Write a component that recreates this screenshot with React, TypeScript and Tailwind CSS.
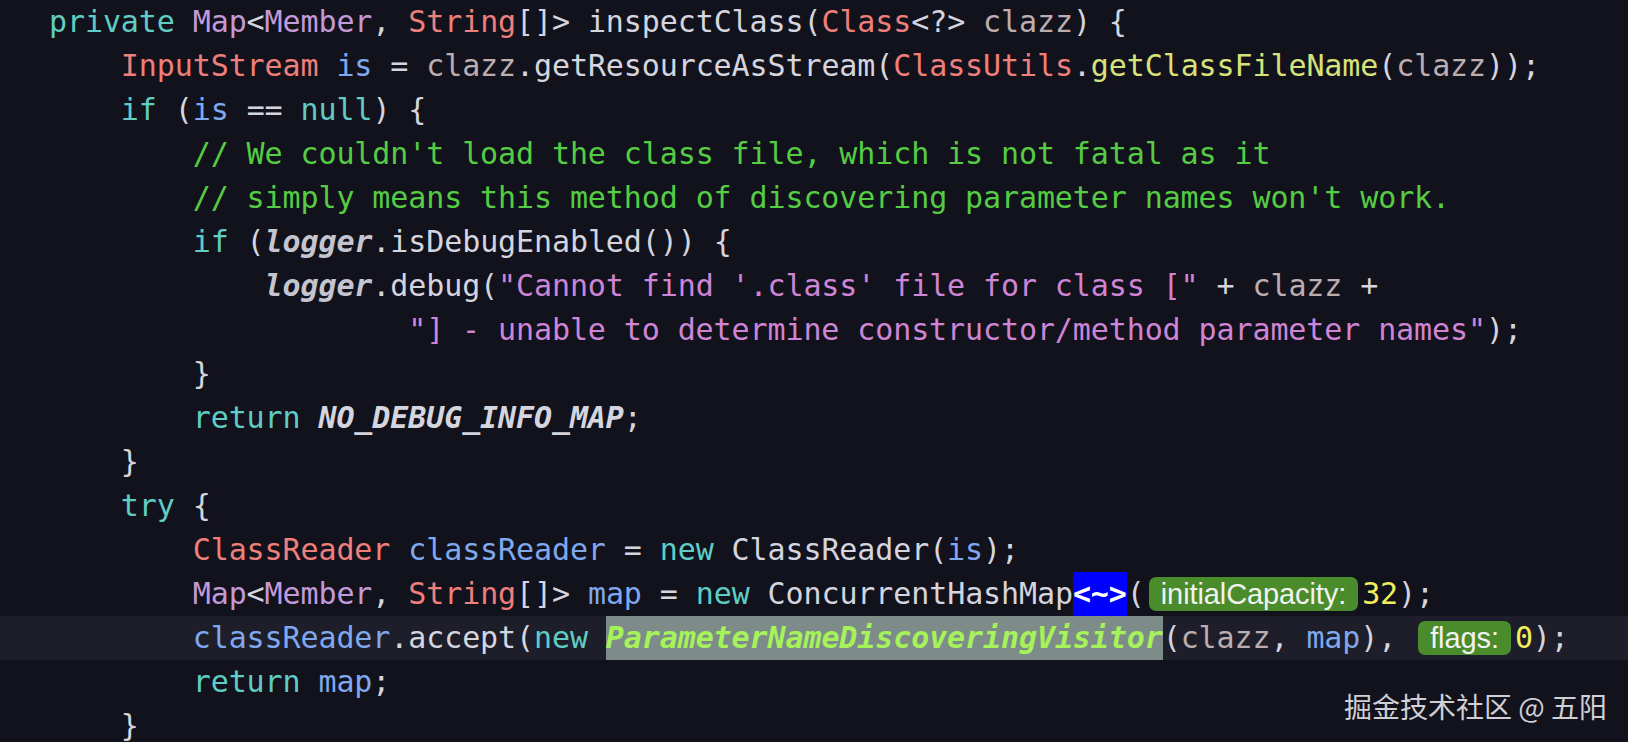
import React from 'react';

// token kinds -> tailwind classes
const styles: Record<string, string> = {
  p: 'text-[#d5d5df]',
  kw: 'text-[#5fcdc4]',
  ty: 'text-[#ee7f7a]',
  gen: 'text-[#c39ad9]',
  v: 'text-[#7fa8ee]',
  arg: 'text-[#bcaeb0]',
  fn: 'text-[#d8e27b]',
  cm: 'text-[#55cc44]',
  str: 'text-[#cf85d6]',
  num: 'text-[#f2ee5c]',
  log: 'text-[#c5c5d0] font-bold italic',
  cst: 'text-[#d5d5df] font-bold italic',
  dia: 'bg-[#0000ff] text-white font-bold',
  sel: 'bg-[#7d8c89] text-[#a6f25a] font-bold italic',
};

type Tok = [string, string];
type Row = { toks: Tok[]; hl?: boolean };

const sp = (n: number): Tok => [' '.repeat(n), 'p'];

const rows: Row[] = [
  {
    toks: [
      ['private ', 'kw'], ['Map', 'gen'], ['<', 'p'], ['Member', 'gen'], [', ', 'p'],
      ['String', 'ty'], ['[]> inspectClass(', 'p'], ['Class', 'ty'], ['<?> ', 'p'],
      ['clazz', 'arg'], [') {', 'p'],
    ],
  },
  {
    toks: [
      sp(4), ['InputStream ', 'ty'], ['is', 'v'], [' = ', 'p'], ['clazz', 'arg'],
      ['.getResourceAsStream(', 'p'], ['ClassUtils', 'ty'], ['.', 'p'], ['getClassFileName', 'fn'],
      ['(', 'p'], ['clazz', 'arg'], ['));', 'p'],
    ],
  },
  { toks: [sp(4), ['if', 'kw'], [' (', 'p'], ['is', 'v'], [' == ', 'p'], ['null', 'kw'], [') {', 'p']] },
  { toks: [sp(8), ["// We couldn't load the class file, which is not fatal as it", 'cm']] },
  { toks: [sp(8), ["// simply means this method of discovering parameter names won't work.", 'cm']] },
  { toks: [sp(8), ['if', 'kw'], [' (', 'p'], ['logger', 'log'], ['.isDebugEnabled()) {', 'p']] },
  {
    toks: [
      sp(12), ['logger', 'log'], ['.debug(', 'p'], ['"Cannot find \'.class\' file for class ["', 'str'],
      [' + ', 'p'], ['clazz', 'arg'], [' +', 'p'],
    ],
  },
  { toks: [sp(20), ['"] - unable to determine constructor/method parameter names"', 'str'], [');', 'p']] },
  { toks: [sp(8), ['}', 'p']] },
  { toks: [sp(8), ['return ', 'kw'], ['NO_DEBUG_INFO_MAP', 'cst'], [';', 'p']] },
  { toks: [sp(4), ['}', 'p']] },
  { toks: [sp(4), ['try', 'kw'], [' {', 'p']] },
  {
    toks: [
      sp(8), ['ClassReader ', 'ty'], ['classReader', 'v'], [' = ', 'p'], ['new', 'kw'],
      [' ClassReader(', 'p'], ['is', 'v'], [');', 'p'],
    ],
  },
  {
    toks: [
      sp(8), ['Map', 'gen'], ['<', 'p'], ['Member', 'gen'], [', ', 'p'], ['String', 'ty'], ['[]> ', 'p'],
      ['map', 'v'], [' = ', 'p'], ['new', 'kw'], [' ConcurrentHashMap', 'p'], ['<~>', 'dia'], ['(', 'p'],
      ['initialCapacity:', 'hint'], ['32', 'num'], [');', 'p'],
    ],
  },
  {
    hl: true,
    toks: [
      sp(8), ['classReader', 'v'], ['.accept(', 'p'], ['new', 'kw'], [' ', 'p'],
      ['ParameterNameDiscoveringVisitor', 'sel'], ['(', 'p'], ['clazz', 'arg'], [', ', 'p'], ['map', 'v'],
      ['), ', 'p'], ['flags:', 'hint'], ['0', 'num'], [');', 'p'],
    ],
  },
  { toks: [sp(8), ['return ', 'kw'], ['map', 'v'], [';', 'p']] },
  { toks: [sp(4), ['}', 'p']] },
];

function Hint({ label }: { label: string }) {
  return (
    <span className="mx-[4px] inline-flex h-[34px] items-center rounded-[7px] bg-[#4a8c2c] px-[12px] font-['Liberation_Sans',Arial,sans-serif] text-[29px] leading-none text-[#f2f2f2] not-italic font-normal">
      {label}
    </span>
  );
}

export default function App() {
  return (
    <div className="relative h-[742px] w-full overflow-hidden bg-[#12121c]">
      <div className="flex flex-col font-['DejaVu_Sans_Mono',monospace] text-[30px] tracking-[-0.1px]">
        {rows.map((row, i) => (
          <div
            key={i}
            className={`flex h-[44px] items-center whitespace-pre pl-[49px] leading-[44px] ${row.hl ? 'bg-[#1d1e2a]' : ''}`}
          >
            {row.toks.map(([text, kind], j) =>
              kind === 'hint' ? (
                <Hint key={j} label={text} />
              ) : (
                <span key={j} className={styles[kind]}>
                  {text}
                </span>
              )
            )}
          </div>
        ))}
      </div>

      {/* watermark */}
      <div className="absolute bottom-[22px] right-[21px] font-['Noto_Sans_CJK_SC',sans-serif] text-[28px] leading-none text-[#cfcfd4]">
        掘金技术社区 @ 五阳
      </div>
    </div>
  );
}
